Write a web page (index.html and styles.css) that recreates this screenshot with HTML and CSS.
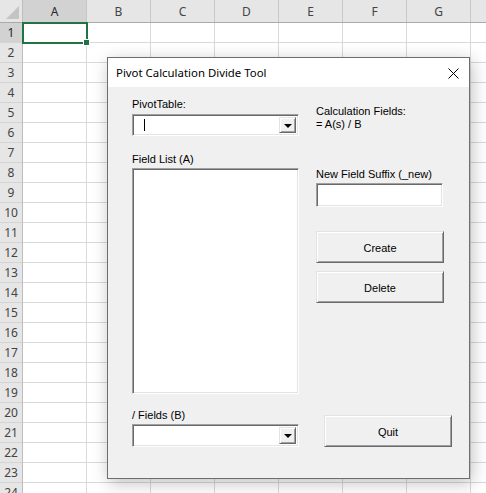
FILE: index.html
```html
<!DOCTYPE html>
<html>
<head>
<meta charset="utf-8">
<link rel="stylesheet" href="styles.css">
</head>
<body>
<div class="sheet">
  <div class="corner"><div class="tri"></div></div>
  <div class="colheads">
    <div class="ch sel">A</div><div class="ch">B</div><div class="ch">C</div><div class="ch">D</div><div class="ch">E</div><div class="ch">F</div><div class="ch">G</div><div class="ch"></div>
  </div>
  <div class="rowheads">
    <div class="rh sel">1</div><div class="rh">2</div><div class="rh">3</div><div class="rh">4</div><div class="rh">5</div><div class="rh">6</div><div class="rh">7</div><div class="rh">8</div><div class="rh">9</div><div class="rh">10</div><div class="rh">11</div><div class="rh">12</div><div class="rh">13</div><div class="rh">14</div><div class="rh">15</div><div class="rh">16</div><div class="rh">17</div><div class="rh">18</div><div class="rh">19</div><div class="rh">20</div><div class="rh">21</div><div class="rh">22</div><div class="rh">23</div><div class="rh">24</div>
  </div>
  <div class="cells">
    <div class="selbox"><div class="handle"></div></div>
  </div>
</div>

<div class="dialog">
  <div class="titlebar">
    <span class="title">Pivot Calculation Divide Tool</span>
    <svg class="close" width="11" height="11" viewBox="0 0 11 11"><path d="M0.5 0.5 L10.5 10.5 M10.5 0.5 L0.5 10.5" stroke="#000" stroke-width="1" fill="none"/></svg>
  </div>
  <div class="form">
    <div class="col left">
      <div class="lbl">PivotTable:</div>
      <div class="combo first"><span class="caret"></span><span class="dd"><span class="arrow"></span></span></div>
      <div class="lbl fl">Field List (A)</div>
      <div class="listbox"></div>
      <div class="lbl fb">/ Fields (B)</div>
      <div class="combo second"><span class="dd"><span class="arrow"></span></span></div>
    </div>
    <div class="col right">
      <div class="lbl calc">Calculation Fields:<br>= A(s) / B</div>
      <div class="lbl suffix">New Field Suffix (_new)</div>
      <div class="textbox"></div>
      <div class="btn create">Create</div>
      <div class="btn delete">Delete</div>
      <div class="btn quit">Quit</div>
    </div>
  </div>
</div>
</body>
</html>
```
FILE: styles.css
```css
html, body {
  margin: 0;
  padding: 0;
  background: #ffffff;
  overflow: hidden;
}
body {
  width: 486px;
  height: 493px;
  position: relative;
  font-family: "Noto Sans", "Liberation Sans", sans-serif;
}
.sheet {
  display: grid;
  grid-template-columns: 23px 463px;
  grid-template-rows: 23px 470px;
  overflow: hidden;
  height: 493px;
}
.corner {
  background: #e6e6e6;
  border-right: 1px solid #bdbdbd;
  border-bottom: 1px solid #ababab;
  box-sizing: border-box;
  position: relative;
}
.tri {
  position: absolute;
  right: 3px;
  bottom: 3px;
  width: 0;
  height: 0;
  border-left: 13px solid transparent;
  border-bottom: 13px solid #c4c4c4;
}
.colheads {
  display: flex;
  background: #e6e6e6;
  border-bottom: 1px solid #ababab;
  box-sizing: border-box;
  overflow: hidden;
}
.ch {
  flex: 0 0 64px;
  box-sizing: border-box;
  border-right: 1px solid #c6c6c6;
  font-size: 12px;
  color: #444;
  display: flex;
  align-items: center;
  justify-content: center;
  padding-top: 1px;
}
.ch.sel {
  background: #d2d2d2;
  color: #262626;
}
.rowheads {
  display: flex;
  flex-direction: column;
  background: #e6e6e6;
  border-right: 1px solid #bdbdbd;
  box-sizing: border-box;
  overflow: hidden;
}
.rh {
  flex: 0 0 20px;
  box-sizing: border-box;
  border-bottom: 1px solid #d4d4d4;
  font-size: 12px;
  color: #444;
  display: flex;
  align-items: center;
  justify-content: center;
}
.rh.sel {
  background: #d2d2d2;
  color: #262626;
}
.cells {
  position: relative;
  background-color: #fff;
  background-image:
    linear-gradient(to right, transparent 63px, #d9d9d9 63px),
    linear-gradient(to bottom, transparent 19px, #d9d9d9 19px);
  background-size: 64px 100%, 100% 20px;
}
.selbox {
  position: absolute;
  left: -1px;
  top: -1px;
  width: 66px;
  height: 22px;
  box-sizing: border-box;
  border: 2px solid #217346;
}
.handle {
  position: absolute;
  right: -4px;
  bottom: -4px;
  width: 5px;
  height: 5px;
  background: #217346;
  border: 1px solid #fff;
}

.dialog {
  position: absolute;
  left: 107px;
  top: 57px;
  width: 363px;
  height: 422px;
  box-sizing: border-box;
  border: 1px solid #6e6e6e;
  background: #f0f0f0;
  box-shadow: 2px 4px 16px rgba(0, 0, 0, 0.25);
  display: flex;
  flex-direction: column;
}
.titlebar {
  flex: 0 0 29px;
  background: #fff;
  display: flex;
  align-items: center;
  padding-left: 8px;
  padding-right: 10px;
}
.title {
  font-family: "Noto Sans", sans-serif;
  font-size: 11.4px;
  color: #000;
  flex: 1;
}
.close {
  display: block;
  margin-top: 1px;
}
.form {
  flex: 1;
  display: grid;
  grid-template-columns: 167px 136px;
  column-gap: 17px;
  padding: 11px 0 0 24px;
  font-family: "Liberation Sans", Arial, sans-serif;
  font-size: 11px;
  color: #000;
}
.col {
  display: flex;
  flex-direction: column;
  align-items: flex-start;
}
.lbl {
  line-height: 13px;
  white-space: nowrap;
}
.combo, .listbox, .textbox {
  box-sizing: border-box;
  background: #fff;
  border: 1px solid;
  border-color: #a0a0a0 #fff #fff #a0a0a0;
  box-shadow: inset 1px 1px 0 #696969, inset -1px -1px 0 #e3e3e3;
}
.combo {
  width: 167px;
  height: 22px;
  position: relative;
  display: flex;
  justify-content: flex-end;
  align-items: stretch;
  padding: 2px;
}
.combo.first { margin-top: 3px; }
.combo.second { margin-top: 2px; height: 23px; }
.caret {
  position: absolute;
  left: 11px;
  top: 4px;
  width: 1px;
  height: 12px;
  background: #000;
}
.dd {
  width: 17px;
  box-sizing: border-box;
  background: #f0f0f0;
  border: 1px solid;
  border-color: #e3e3e3 #696969 #696969 #e3e3e3;
  box-shadow: inset 1px 1px 0 #fff, inset -1px -1px 0 #a0a0a0;
  display: flex;
  align-items: center;
  justify-content: center;
}
.arrow {
  width: 0;
  height: 0;
  border-left: 4px solid transparent;
  border-right: 4px solid transparent;
  border-top: 4px solid #000;
  margin-top: 1px;
}
.lbl.fl { margin-top: 17px; }
.listbox {
  width: 167px;
  height: 226px;
  margin-top: 2px;
}
.lbl.fb { margin-top: 15px; }
.lbl.calc { margin-top: 7px; }
.lbl.suffix { margin-top: 37px; }
.textbox {
  width: 127px;
  height: 24px;
  margin-top: 2px;
}
.btn {
  box-sizing: border-box;
  width: 128px;
  height: 32px;
  background: #f0f0f0;
  border: 1px solid;
  border-color: #e3e3e3 #696969 #696969 #e3e3e3;
  box-shadow: inset 1px 1px 0 #fff, inset -1px -1px 0 #a0a0a0;
  display: flex;
  align-items: center;
  justify-content: center;
  padding-top: 1px;
}
.btn.create { margin-top: 24px; }
.btn.delete { margin-top: 8px; }
.btn.quit { margin-top: 112px; margin-left: 8px; }
```
